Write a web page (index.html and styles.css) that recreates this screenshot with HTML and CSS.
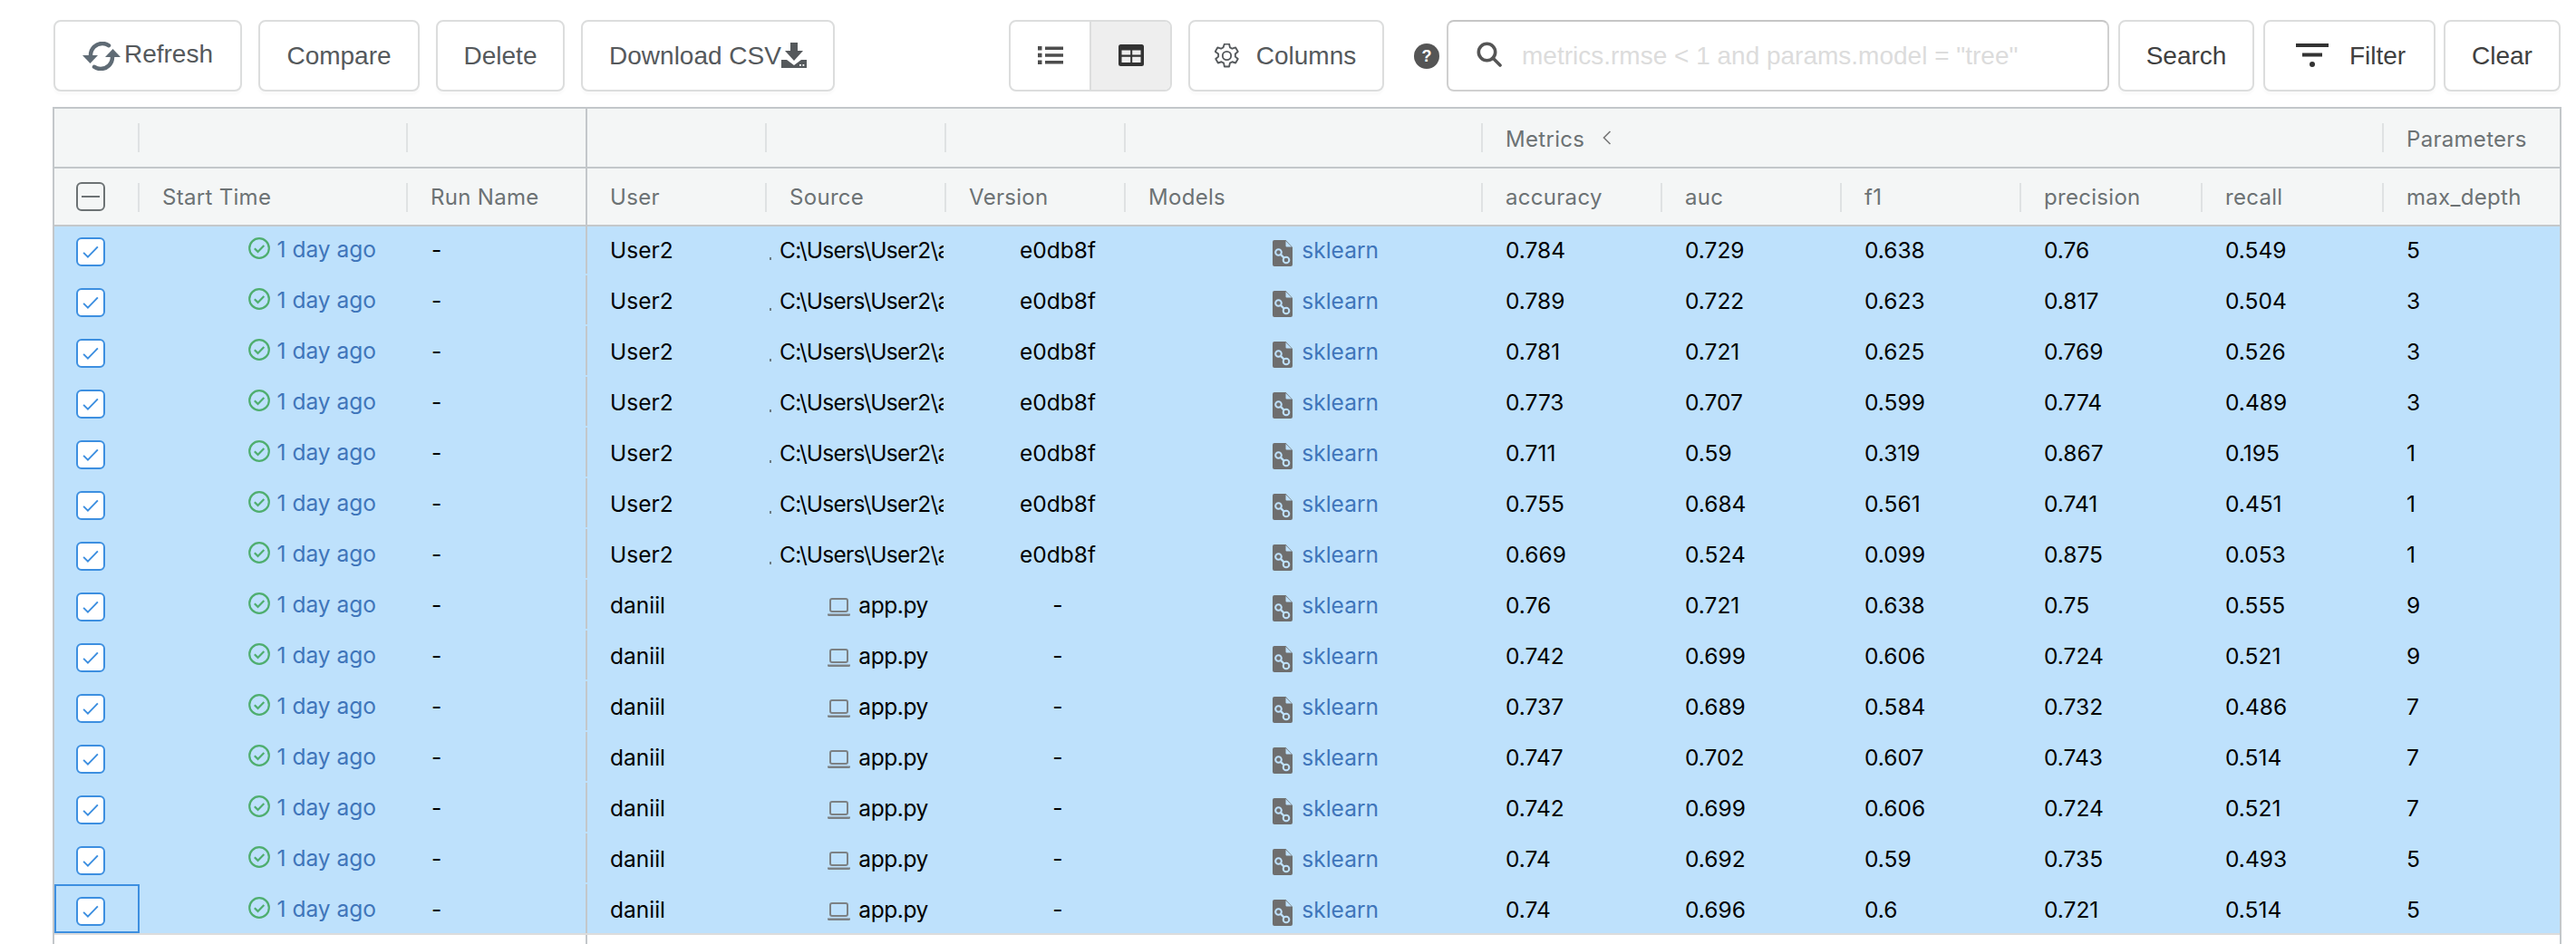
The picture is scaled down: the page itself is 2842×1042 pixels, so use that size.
FILE: index.html
```html
<!DOCTYPE html>
<html lang="en">
<head>
<meta charset="utf-8">
<title>Experiment runs</title>
<link rel="stylesheet" href="styles.css">
</head>
<body>
<svg class="sprite" aria-hidden="true">
  <symbol id="i-ok" viewBox="0 0 24 24"><circle cx="12" cy="12" r="10.8" fill="none" stroke="#4fae6f" stroke-width="2.200"/><path d="M6.800 12.200l3.700 3.700 6.800-7" fill="none" stroke="#4fae6f" stroke-width="2.200"/></symbol>
  <symbol id="i-check" viewBox="0 0 32 32"><path d="M7 17l5.500 5.500L25 9.500" fill="none" stroke="#3d8fe0" stroke-width="2.200"/></symbol>
  <symbol id="i-model" viewBox="0 0 22 29"><path d="M2 0h12.500L22 8v19a2 2 0 0 1-2 2H2a2 2 0 0 1-2-2V2a2 2 0 0 1 2-2z" fill="#6e6e6e"/><path d="M14.500 1v5.500a1 1 0 0 0 1 1H21z" fill="#bee1fc"/><path d="M6.500 13.500L15 22" stroke="#bee1fc" stroke-width="2.400"/><circle cx="6.500" cy="13.500" r="3.300" fill="#6e6e6e" stroke="#bee1fc" stroke-width="2"/><circle cx="15" cy="22" r="3.300" fill="#6e6e6e" stroke="#bee1fc" stroke-width="2"/></symbol>
  <symbol id="i-laptop" viewBox="0 0 25 20"><rect x="3" y="1" width="19" height="14" rx="2" fill="none" stroke="#7c8184" stroke-width="2"/><path d="M0 17.500h25v1a1.500 1.500 0 0 1-1.500 1.500h-22A1.500 1.500 0 0 1 0 18.500z" fill="#7c8184"/></symbol>
</svg>

<header class="toolbar">
  <button class="btn btn-refresh" type="button">
    <svg class="ic-refresh" viewBox="0 0 42 32" fill="none"><path d="M9 15C9 7.500 15 2 22 2c3 0 5 .7 7 2.200" stroke="#5f6b75" stroke-width="4.500" stroke-linecap="round"/><path d="M0 15h17l-8.500 9z" fill="#5f6b75"/><path d="M33 17c0 7.500-6 13-13 13-3 0-5-.7-7-2.200" stroke="#5f6b75" stroke-width="4.500" stroke-linecap="round"/><path d="M25 17h17l-8.500-9z" fill="#5f6b75"/></svg>
    <span class="refresh-label">Refresh</span>
  </button>
  <button class="btn btn-compare" type="button">Compare</button>
  <button class="btn btn-delete" type="button">Delete</button>
  <button class="btn btn-download" type="button">Download CSV<svg class="ic-download" viewBox="0 0 28 28"><path d="M10 0h8v9h6L14 20 4 9h6z" fill="#55595c"/><path d="M0 19h6l8 6 8-6h6v9H0z" fill="#55595c"/><rect x="20" y="24" width="1.800" height="1.800" fill="#fff"/><rect x="23.500" y="24" width="1.800" height="1.800" fill="#fff"/></svg></button>

  <div class="segment">
    <span class="seg-item">
      <svg class="ic-list" viewBox="0 0 28 24"><path d="M0 2h4.500v4.500H0zM0 9.700h4.500v4.500H0zM0 17.500h4.500V22H0z" fill="#4d4d4d"/><path d="M8 2.500h20v3.400H8zM8 10.300h20v3.400H8zM8 18h20v3.400H8z" fill="#4d4d4d"/></svg>
    </span>
    <span class="seg-item seg-active">
      <svg class="ic-grid" viewBox="0 0 28 24"><rect width="28" height="24" rx="2.500" fill="#333"/><path d="M3.500 6.500h9.700v5H3.500zM15.200 6.500h9.300v5h-9.300zM3.500 13.700h9.700v6.300H3.500zM15.200 13.700h9.300v6.300h-9.300z" fill="#eee"/></svg>
    </span>
  </div>

  <button class="btn btn-columns" type="button">
    <svg class="ic-gear" viewBox="1 1 26 26" fill="none" stroke="#55595c" stroke-width="1.800"><circle cx="14" cy="14" r="4.500"/><path d="M11.500 1.500h5l.8 3.700 2.400 1.300 3.600-1.200 2.500 4.300-2.800 2.500v2.800l2.800 2.500-2.500 4.300-3.600-1.200-2.400 1.300-.8 3.700h-5l-.8-3.700-2.400-1.300-3.600 1.200-2.500-4.300 2.800-2.500v-2.800L1.700 9.600l2.500-4.300 3.600 1.200 2.400-1.300z" stroke-linejoin="round"/></svg>
    Columns
  </button>

  <span class="help">?</span>

  <div class="search">
    <svg class="ic-search" viewBox="0 0 28 28" fill="none" stroke="#555" stroke-width="3.600"><circle cx="11.500" cy="11.500" r="9.200"/><path d="M18 18l8 8" stroke-linecap="round"/></svg>
    <span class="placeholder">metrics.rmse &lt; 1 and params.model = "tree"</span>
  </div>

  <button class="btn btn-search" type="button">Search</button>
  <button class="btn btn-filter" type="button">
    <svg class="ic-filter" viewBox="0 0 36 26"><path d="M0 0h36v4H0zM7 10.500h22v4H7z" fill="#333"/><circle cx="18" cy="23" r="3" fill="#333"/></svg>
    Filter
  </button>
  <button class="btn btn-clear" type="button">Clear</button>
</header>

<main class="table">
  <div class="thead">
    <div class="tr tr-group">
      <div class="th"></div>
      <div class="th"></div>
      <div class="th th-pin"></div>
      <div class="th"></div>
      <div class="th"></div>
      <div class="th"></div>
      <div class="th"></div>
      <div class="th th-metrics"><span class="group-label">Metrics</span><svg class="ic-chev" viewBox="0 0 10 16"><path d="M8.500 1L1.500 8l7 7" fill="none" stroke="#777" stroke-width="1.600"/></svg></div>
      <div class="th th-last"><span class="group-label">Parameters</span></div>
    </div>
    <div class="tr tr-names">
      <div class="th th-box"><span class="box box-minus"></span></div>
      <div class="th">Start Time</div>
      <div class="th th-pin">Run Name</div>
      <div class="th">User</div>
      <div class="th">Source</div>
      <div class="th">Version</div>
      <div class="th">Models</div>
      <div class="th">accuracy</div>
      <div class="th">auc</div>
      <div class="th">f1</div>
      <div class="th">precision</div>
      <div class="th">recall</div>
      <div class="th th-last">max_depth</div>
    </div>
  </div>

  <div class="tbody">
    <div class="tr row">
      <div class="td td-box"><span class="box"><svg class="ic-check"><use href="#i-check"/></svg></span></div>
      <div class="td td-time"><svg class="ic-ok"><use href="#i-ok"/></svg><a class="link">1 day ago</a></div>
      <div class="td td-pin">-</div><div class="td">User2</div>
      <div class="td td-src"><i class="dot"></i>C:\Users\User2\app</div><div class="td td-ver">e0db8f</div>
      <div class="td td-model"><svg class="ic-model"><use href="#i-model"/></svg><a class="link">sklearn</a></div>
      <div class="td">0.784</div><div class="td">0.729</div><div class="td">0.638</div><div class="td">0.76</div><div class="td">0.549</div><div class="td">5</div>
    </div>
    <div class="tr row">
      <div class="td td-box"><span class="box"><svg class="ic-check"><use href="#i-check"/></svg></span></div>
      <div class="td td-time"><svg class="ic-ok"><use href="#i-ok"/></svg><a class="link">1 day ago</a></div>
      <div class="td td-pin">-</div><div class="td">User2</div>
      <div class="td td-src"><i class="dot"></i>C:\Users\User2\app</div><div class="td td-ver">e0db8f</div>
      <div class="td td-model"><svg class="ic-model"><use href="#i-model"/></svg><a class="link">sklearn</a></div>
      <div class="td">0.789</div><div class="td">0.722</div><div class="td">0.623</div><div class="td">0.817</div><div class="td">0.504</div><div class="td">3</div>
    </div>
    <div class="tr row">
      <div class="td td-box"><span class="box"><svg class="ic-check"><use href="#i-check"/></svg></span></div>
      <div class="td td-time"><svg class="ic-ok"><use href="#i-ok"/></svg><a class="link">1 day ago</a></div>
      <div class="td td-pin">-</div><div class="td">User2</div>
      <div class="td td-src"><i class="dot"></i>C:\Users\User2\app</div><div class="td td-ver">e0db8f</div>
      <div class="td td-model"><svg class="ic-model"><use href="#i-model"/></svg><a class="link">sklearn</a></div>
      <div class="td">0.781</div><div class="td">0.721</div><div class="td">0.625</div><div class="td">0.769</div><div class="td">0.526</div><div class="td">3</div>
    </div>
    <div class="tr row">
      <div class="td td-box"><span class="box"><svg class="ic-check"><use href="#i-check"/></svg></span></div>
      <div class="td td-time"><svg class="ic-ok"><use href="#i-ok"/></svg><a class="link">1 day ago</a></div>
      <div class="td td-pin">-</div><div class="td">User2</div>
      <div class="td td-src"><i class="dot"></i>C:\Users\User2\app</div><div class="td td-ver">e0db8f</div>
      <div class="td td-model"><svg class="ic-model"><use href="#i-model"/></svg><a class="link">sklearn</a></div>
      <div class="td">0.773</div><div class="td">0.707</div><div class="td">0.599</div><div class="td">0.774</div><div class="td">0.489</div><div class="td">3</div>
    </div>
    <div class="tr row">
      <div class="td td-box"><span class="box"><svg class="ic-check"><use href="#i-check"/></svg></span></div>
      <div class="td td-time"><svg class="ic-ok"><use href="#i-ok"/></svg><a class="link">1 day ago</a></div>
      <div class="td td-pin">-</div><div class="td">User2</div>
      <div class="td td-src"><i class="dot"></i>C:\Users\User2\app</div><div class="td td-ver">e0db8f</div>
      <div class="td td-model"><svg class="ic-model"><use href="#i-model"/></svg><a class="link">sklearn</a></div>
      <div class="td">0.711</div><div class="td">0.59</div><div class="td">0.319</div><div class="td">0.867</div><div class="td">0.195</div><div class="td">1</div>
    </div>
    <div class="tr row">
      <div class="td td-box"><span class="box"><svg class="ic-check"><use href="#i-check"/></svg></span></div>
      <div class="td td-time"><svg class="ic-ok"><use href="#i-ok"/></svg><a class="link">1 day ago</a></div>
      <div class="td td-pin">-</div><div class="td">User2</div>
      <div class="td td-src"><i class="dot"></i>C:\Users\User2\app</div><div class="td td-ver">e0db8f</div>
      <div class="td td-model"><svg class="ic-model"><use href="#i-model"/></svg><a class="link">sklearn</a></div>
      <div class="td">0.755</div><div class="td">0.684</div><div class="td">0.561</div><div class="td">0.741</div><div class="td">0.451</div><div class="td">1</div>
    </div>
    <div class="tr row">
      <div class="td td-box"><span class="box"><svg class="ic-check"><use href="#i-check"/></svg></span></div>
      <div class="td td-time"><svg class="ic-ok"><use href="#i-ok"/></svg><a class="link">1 day ago</a></div>
      <div class="td td-pin">-</div><div class="td">User2</div>
      <div class="td td-src"><i class="dot"></i>C:\Users\User2\app</div><div class="td td-ver">e0db8f</div>
      <div class="td td-model"><svg class="ic-model"><use href="#i-model"/></svg><a class="link">sklearn</a></div>
      <div class="td">0.669</div><div class="td">0.524</div><div class="td">0.099</div><div class="td">0.875</div><div class="td">0.053</div><div class="td">1</div>
    </div>
    <div class="tr row">
      <div class="td td-box"><span class="box"><svg class="ic-check"><use href="#i-check"/></svg></span></div>
      <div class="td td-time"><svg class="ic-ok"><use href="#i-ok"/></svg><a class="link">1 day ago</a></div>
      <div class="td td-pin">-</div><div class="td">daniil</div>
      <div class="td td-app"><svg class="ic-laptop"><use href="#i-laptop"/></svg>app.py</div><div class="td td-ver">-</div>
      <div class="td td-model"><svg class="ic-model"><use href="#i-model"/></svg><a class="link">sklearn</a></div>
      <div class="td">0.76</div><div class="td">0.721</div><div class="td">0.638</div><div class="td">0.75</div><div class="td">0.555</div><div class="td">9</div>
    </div>
    <div class="tr row">
      <div class="td td-box"><span class="box"><svg class="ic-check"><use href="#i-check"/></svg></span></div>
      <div class="td td-time"><svg class="ic-ok"><use href="#i-ok"/></svg><a class="link">1 day ago</a></div>
      <div class="td td-pin">-</div><div class="td">daniil</div>
      <div class="td td-app"><svg class="ic-laptop"><use href="#i-laptop"/></svg>app.py</div><div class="td td-ver">-</div>
      <div class="td td-model"><svg class="ic-model"><use href="#i-model"/></svg><a class="link">sklearn</a></div>
      <div class="td">0.742</div><div class="td">0.699</div><div class="td">0.606</div><div class="td">0.724</div><div class="td">0.521</div><div class="td">9</div>
    </div>
    <div class="tr row">
      <div class="td td-box"><span class="box"><svg class="ic-check"><use href="#i-check"/></svg></span></div>
      <div class="td td-time"><svg class="ic-ok"><use href="#i-ok"/></svg><a class="link">1 day ago</a></div>
      <div class="td td-pin">-</div><div class="td">daniil</div>
      <div class="td td-app"><svg class="ic-laptop"><use href="#i-laptop"/></svg>app.py</div><div class="td td-ver">-</div>
      <div class="td td-model"><svg class="ic-model"><use href="#i-model"/></svg><a class="link">sklearn</a></div>
      <div class="td">0.737</div><div class="td">0.689</div><div class="td">0.584</div><div class="td">0.732</div><div class="td">0.486</div><div class="td">7</div>
    </div>
    <div class="tr row">
      <div class="td td-box"><span class="box"><svg class="ic-check"><use href="#i-check"/></svg></span></div>
      <div class="td td-time"><svg class="ic-ok"><use href="#i-ok"/></svg><a class="link">1 day ago</a></div>
      <div class="td td-pin">-</div><div class="td">daniil</div>
      <div class="td td-app"><svg class="ic-laptop"><use href="#i-laptop"/></svg>app.py</div><div class="td td-ver">-</div>
      <div class="td td-model"><svg class="ic-model"><use href="#i-model"/></svg><a class="link">sklearn</a></div>
      <div class="td">0.747</div><div class="td">0.702</div><div class="td">0.607</div><div class="td">0.743</div><div class="td">0.514</div><div class="td">7</div>
    </div>
    <div class="tr row">
      <div class="td td-box"><span class="box"><svg class="ic-check"><use href="#i-check"/></svg></span></div>
      <div class="td td-time"><svg class="ic-ok"><use href="#i-ok"/></svg><a class="link">1 day ago</a></div>
      <div class="td td-pin">-</div><div class="td">daniil</div>
      <div class="td td-app"><svg class="ic-laptop"><use href="#i-laptop"/></svg>app.py</div><div class="td td-ver">-</div>
      <div class="td td-model"><svg class="ic-model"><use href="#i-model"/></svg><a class="link">sklearn</a></div>
      <div class="td">0.742</div><div class="td">0.699</div><div class="td">0.606</div><div class="td">0.724</div><div class="td">0.521</div><div class="td">7</div>
    </div>
    <div class="tr row">
      <div class="td td-box"><span class="box"><svg class="ic-check"><use href="#i-check"/></svg></span></div>
      <div class="td td-time"><svg class="ic-ok"><use href="#i-ok"/></svg><a class="link">1 day ago</a></div>
      <div class="td td-pin">-</div><div class="td">daniil</div>
      <div class="td td-app"><svg class="ic-laptop"><use href="#i-laptop"/></svg>app.py</div><div class="td td-ver">-</div>
      <div class="td td-model"><svg class="ic-model"><use href="#i-model"/></svg><a class="link">sklearn</a></div>
      <div class="td">0.74</div><div class="td">0.692</div><div class="td">0.59</div><div class="td">0.735</div><div class="td">0.493</div><div class="td">5</div>
    </div>
    <div class="tr row row-last">
      <div class="td td-box td-focus"><span class="box"><svg class="ic-check"><use href="#i-check"/></svg></span></div>
      <div class="td td-time"><svg class="ic-ok"><use href="#i-ok"/></svg><a class="link">1 day ago</a></div>
      <div class="td td-pin">-</div><div class="td">daniil</div>
      <div class="td td-app"><svg class="ic-laptop"><use href="#i-laptop"/></svg>app.py</div><div class="td td-ver">-</div>
      <div class="td td-model"><svg class="ic-model"><use href="#i-model"/></svg><a class="link">sklearn</a></div>
      <div class="td">0.74</div><div class="td">0.696</div><div class="td">0.6</div><div class="td">0.721</div><div class="td">0.514</div><div class="td">5</div>
    </div>
    <div class="tr filler"><div class="fill-pin"></div></div>
  </div>
</main>
</body>
</html>
```

FILE: styles.css
```css
* { box-sizing: border-box; }

html, body { height: 100%; }

body {
  margin: 0;
  height: 1042px;
  overflow: hidden;
  background: #fff;
  display: flex;
  flex-direction: column;
  font-family: Inter, "Liberation Sans", sans-serif;
  color: #000;
}

.sprite { display: none; }

/* Toolbar */
.toolbar {
  display: flex;
  align-items: stretch;
  height: 79px;
  margin: 22px 0 17px 59px;
  font-family: "Liberation Sans", Arial, sans-serif;
  font-size: 28px;
  color: #55595c;
}

.btn {
  display: flex;
  align-items: center;
  justify-content: center;
  padding: 0;
  background: #fff;
  border: 2px solid #dcdddd;
  border-radius: 8px;
  box-shadow: 0 4px 3px rgba(0, 0, 0, 0.02);
  font: inherit;
  color: inherit;
}

.btn-refresh { width: 208px; margin-right: 18px; }
.btn-compare { width: 178px; margin-right: 18px; }
.btn-delete { width: 142px; margin-right: 18px; }
.btn-download { width: 280px; margin-right: 192px; }
.btn-columns { width: 216px; margin-right: 33px; gap: 19px; padding-right: 2px; }
.btn-search { width: 150px; margin-right: 10px; color: #404040; }
.btn-filter { width: 190px; margin-right: 9px; gap: 23px; padding-left: 3px; color: #404040; }
.btn-clear { width: 129px; color: #404040; }

.ic-refresh { width: 42px; height: 32px; margin: 1px 4px 0 0; }
.refresh-label { margin-top: -3px; }
.ic-download { width: 28px; height: 28px; margin: -2px 0 0 0; }
.ic-gear { width: 27px; height: 27px; margin-top: -1px; }
.ic-filter { width: 36px; height: 26px; margin-top: -1px; }

.segment {
  display: flex;
  width: 180px;
  margin-right: 18px;
  border: 2px solid #dcdddd;
  border-radius: 8px;
  overflow: hidden;
}
.seg-item {
  flex: 1;
  display: flex;
  align-items: center;
  justify-content: center;
  padding-bottom: 1px;
}
.seg-active {
  background: #eee;
  border-left: 2px solid #dcdddd;
}
.ic-list, .ic-grid { width: 28px; height: 24px; }

.help {
  align-self: center;
  width: 28px;
  height: 28px;
  margin-right: 8px;
  border-radius: 50%;
  background: #555;
  color: #fff;
  font-size: 18px;
  font-weight: 700;
  line-height: 28px;
  text-align: center;
}

.search {
  flex: 0 0 731px;
  display: flex;
  align-items: center;
  gap: 22px;
  margin-right: 10px;
  padding: 0 0 0 31px;
  background: #fff;
  border: 2px solid #d0d0d0;
  border-top-color: #c6c6c6;
  border-radius: 8px;
}
.ic-search { width: 28px; height: 28px; margin-top: -3px; }
.placeholder { color: #dcdcdc; }

/* Table */
.table {
  flex: 1;
  display: flex;
  flex-direction: column;
  width: 2768px;
  margin-left: 58px;
  border: 2px solid #c3c7ca;
  border-bottom: 0;
  min-height: 0;
}

.tr {
  display: grid;
  grid-template-columns: 94px 296px 198px 198px 198px 198px 394px 198px 198px 198px 200px 200px 194px;
}

.thead {
  position: relative;
  z-index: 1;
  background: #f4f6f6;
  color: #6c7274;
  font-size: 24px;
  letter-spacing: 0.3px;
}
.tr-group { height: 66px; border-bottom: 2px solid #c3c7ca; }
.tr-names { height: 64px; border-bottom: 2px solid #c3c7ca; }

.th {
  position: relative;
  display: flex;
  align-items: center;
  padding-left: 25px;
  white-space: nowrap;
}
.th::after {
  content: "";
  position: absolute;
  right: 0;
  top: 16px;
  width: 2px;
  height: 32px;
  background: #dfe2e3;
}
.th-last::after, .th-pin::after { display: none; }
.th-pin { border-right: 2px solid #c3c7ca; }
.th-box { padding-left: 24px; }
.th-metrics { grid-column: span 5; }
.group-label { padding-top: 2px; }
.ic-chev { width: 10px; height: 16px; margin-left: 20px; margin-top: -1px; }

.tbody {
  flex: 1;
  display: flex;
  flex-direction: column;
  margin-top: -2px;
  font-size: 24.5px;
  min-height: 0;
}

.row {
  height: 56px;
  background: #bee1fc;
  border-bottom: 2px solid #bee1fc;
}
.row-last { border-bottom-color: #dcdcdc; }

.td {
  position: relative;
  display: flex;
  align-items: center;
  height: 54px;
  padding: 2px 0 0 25px;
  white-space: nowrap;
}
.td-pin { border-right: 2px solid #c3c7ca; padding-left: 26px; }
.td-box { padding: 6px 0 0 24px; }
.td-time { justify-content: flex-end; padding: 0 35px 0 0; gap: 8px; }
.td-src { padding-left: 13px; overflow: hidden; margin-right: 3px; letter-spacing: -0.7px; }
.td-app { justify-content: flex-end; padding-right: 20px; gap: 9px; letter-spacing: -0.4px; }
.td-ver { justify-content: center; padding: 2px 34px 0 82px; }
.td-model { justify-content: flex-end; padding-right: 115px; gap: 10px; }

.td-focus::after {
  content: "";
  position: absolute;
  inset: 0;
  border: 2px solid #3d8fe0;
}

.link { color: #3f75ba; }

.box {
  display: block;
  width: 32px;
  height: 32px;
  background: #fff;
  border: 2px solid #3d8fe0;
  border-radius: 6px;
}
.box-minus {
  position: relative;
  background: transparent;
  border-color: #6c7274;
}
.box-minus::after {
  content: "";
  position: absolute;
  left: 4px;
  right: 4px;
  top: 13px;
  height: 2px;
  background: #6c7274;
}
.ic-check { display: block; width: 28px; height: 28px; }
.ic-ok { width: 24px; height: 24px; flex: none; margin-top: -2px; }
.ic-model { width: 22px; height: 29px; flex: none; margin-top: 6px; }
.ic-laptop { width: 25px; height: 20px; flex: none; margin-top: 3px; }

.dot {
  flex: none;
  width: 2px;
  height: 3px;
  margin: 18px 9px 0 -10px;
  background: #6b7a85;
}

.filler {
  flex: 1;
  background: #fff;
}
.fill-pin {
  grid-column: 1 / 4;
  border-right: 2px solid #c3c7ca;
}
```
